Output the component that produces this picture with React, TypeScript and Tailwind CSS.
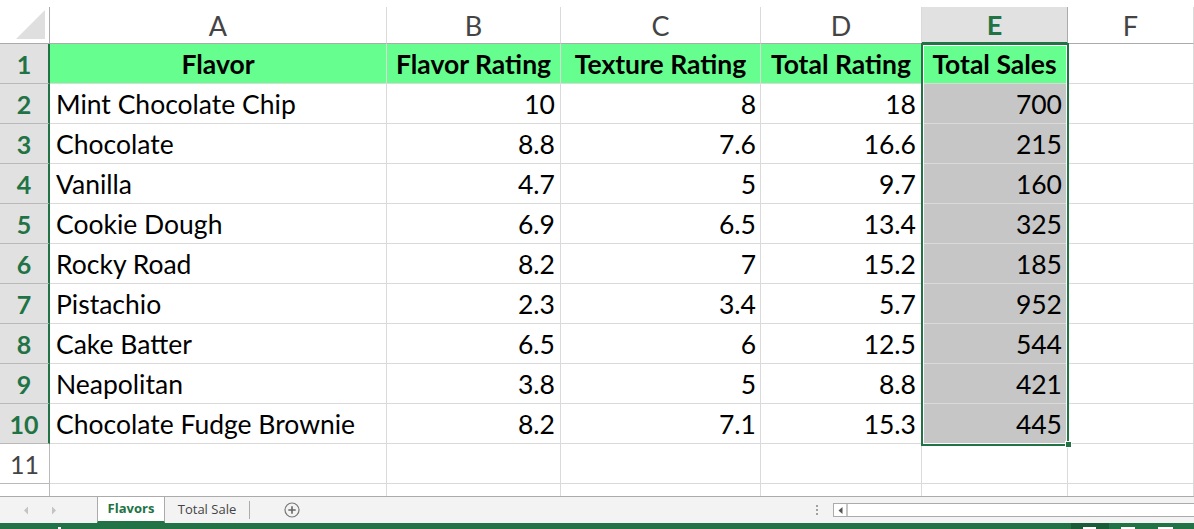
import type { ReactNode } from "react";

const COLS = ["A", "B", "C", "D", "E", "F"];
const HEAD = ["Flavor", "Flavor Rating", "Texture Rating", "Total Rating", "Total Sales"];

const ROWS: [string, string, string, string, string][] = [
  ["Mint Chocolate Chip", "10", "8", "18", "700"],
  ["Chocolate", "8.8", "7.6", "16.6", "215"],
  ["Vanilla", "4.7", "5", "9.7", "160"],
  ["Cookie Dough", "6.9", "6.5", "13.4", "325"],
  ["Rocky Road", "8.2", "7", "15.2", "185"],
  ["Pistachio", "2.3", "3.4", "5.7", "952"],
  ["Cake Batter", "6.5", "6", "12.5", "544"],
  ["Neapolitan", "3.8", "5", "8.8", "421"],
  ["Chocolate Fudge Brownie", "8.2", "7.1", "15.3", "445"],
];

const cellFont = { fontFamily: "Lato, 'Noto Sans', sans-serif" };

function Cell({ children, className = "" }: { children?: ReactNode; className?: string }) {
  return (
    <div className={`flex h-[40px] items-center overflow-visible whitespace-nowrap border-r border-b border-[#dadada] pt-[2px] text-[26.5px] text-black ${className}`}>
      {children}
    </div>
  );
}

function RowHead({ n, selected }: { n: number; selected: boolean }) {
  return (
    <div
      className={`flex h-[40px] items-center justify-center border-b pt-[2px] text-[25px] ${
        selected
          ? "border-r-2 border-b-[#b9b9b9] border-r-[#217346] bg-[#e1e1e1] font-bold text-[#217346]"
          : "border-r border-[#b9b9b9] bg-white text-[#444]"
      }`}
    >
      {n}
    </div>
  );
}

export default function App() {
  return (
    <div className="relative h-[529px] w-[1194px] overflow-hidden bg-white" style={cellFont}>
      <div className="h-[7px]" />
      <div className="grid grid-cols-[50px_337px_174px_200px_161px_146px_1fr]">
        {/* column header row */}
        <div className="relative h-[37px] border-r border-b border-[#ababab] bg-white">
          <div
            className="absolute bottom-[4px] right-[4px] h-[29px] w-[29px] bg-[#dfdfdf]"
            style={{ clipPath: "polygon(100% 0, 100% 100%, 0 100%)" }}
          />
        </div>
        {COLS.map((c) => (
          <div
            key={c}
            className={`flex h-[37px] items-center justify-center border-r pt-[2px] text-[27px] ${
              c === "E"
                ? "border-b-2 border-r-[#ababab] border-b-[#217346] bg-[#e1e1e1] font-bold text-[#217346]"
                : "border-b border-r-[#dadada] border-b-[#ababab] text-[#444]"
            }`}
          >
            {c}
          </div>
        ))}

        {/* row 1: headings */}
        <RowHead n={1} selected />
        {HEAD.map((h) => (
          <Cell key={h} className="justify-center bg-[#66ff8f] font-bold">
            {h}
          </Cell>
        ))}
        <Cell />

        {/* data rows */}
        {ROWS.map((r, i) => (
          <div key={r[0]} className="contents">
            <RowHead n={i + 2} selected />
            <Cell className="pl-[6px]">{r[0]}</Cell>
            <Cell className="justify-end pr-[5px]">{r[1]}</Cell>
            <Cell className="justify-end pr-[4px]">{r[2]}</Cell>
            <Cell className="justify-end pr-[5px]">{r[3]}</Cell>
            <Cell className="justify-end bg-[#c6c6c6] pr-[5px]">{r[4]}</Cell>
            <Cell />
          </div>
        ))}

        {/* row 11 */}
        <RowHead n={11} selected={false} />
        {COLS.map((c) => (
          <Cell key={c} />
        ))}

        {/* row 12, partly visible */}
        <div className="h-[12px] border-r border-[#b9b9b9]" />
        {COLS.map((c) => (
          <div key={c} className="h-[12px] border-r border-[#dadada]" />
        ))}
      </div>

      {/* selection box E1:E10 */}
      <div className="pointer-events-none absolute left-[921px] top-[43px] h-[403px] w-[148px] border-2 border-[#217346] shadow-[inset_0_0_0_1px_white]" />
      <div className="absolute left-[1065px] top-[441px] h-[7px] w-[7px] border border-white bg-[#217346]" />

      {/* sheet tabs */}
      <div
        className="flex h-[27px] items-stretch border-t border-[#ababab] bg-[#f3f3f3] text-[13px]"
        style={{ fontFamily: "'Open Sans', 'Noto Sans', sans-serif" }}
      >
        <div className="flex w-[97px] items-center gap-[22px] pl-[23px]">
          <svg width="6" height="9" viewBox="0 0 6 9">
            <path d="M5 0.5 L1 4.5 L5 8.5 Z" fill="#c4c4c4" />
          </svg>
          <svg width="6" height="9" viewBox="0 0 6 9">
            <path d="M1 0.5 L5 4.5 L1 8.5 Z" fill="#c4c4c4" />
          </svg>
        </div>
        <div className="-mt-px flex w-[68px] items-center justify-center border-x border-t border-[#ababab] border-b-2 border-b-[#217346] bg-white font-bold text-[#217346]">
          Flavors
        </div>
        <div className="flex w-[84px] items-center justify-center text-[#444]">Total Sale</div>
        <div className="my-[4px] w-px bg-[#ababab]" />
        <div className="flex w-[84px] items-center justify-center">
          <svg width="16" height="16" viewBox="0 0 16 16">
            <circle cx="8" cy="8" r="7" fill="none" stroke="#777" strokeWidth="1.2" />
            <path d="M8 4.3 V11.7 M4.3 8 H11.7" stroke="#666" strokeWidth="1.6" />
          </svg>
        </div>
        <div className="flex-1" />
        <div className="flex w-[32px] flex-col items-center justify-center gap-[2px]">
          <div className="h-[2px] w-[2px] bg-[#a0a0a0]" />
          <div className="h-[2px] w-[2px] bg-[#a0a0a0]" />
          <div className="h-[2px] w-[2px] bg-[#a0a0a0]" />
        </div>
        <div className="my-[6px] flex w-[361px] border border-r-0 border-[#ababab] bg-white">
          <div className="flex w-[14px] items-center justify-center border-r-2 border-[#c6c6c6]">
            <svg width="5" height="7" viewBox="0 0 5 7">
              <path d="M4.5 0 L0.5 3.5 L4.5 7 Z" fill="#555" />
            </svg>
          </div>
        </div>
      </div>

      {/* status bar */}
      <div className="relative h-[6px] bg-[#217346]">
        <div className="absolute left-[58px] top-[4px] h-[2px] w-[3px] bg-white" />
        <div className="absolute left-[1071px] top-0 h-[6px] w-[38px] bg-[#1a5c38]" />
        <div className="absolute left-[1083px] top-[4px] h-[2px] w-[13px] bg-white" />
        <div className="absolute left-[1121px] top-[4px] h-[2px] w-[14px] bg-white" />
        <div className="absolute left-[1158px] top-[4px] h-[2px] w-[15px] bg-white" />
      </div>
    </div>
  );
}
